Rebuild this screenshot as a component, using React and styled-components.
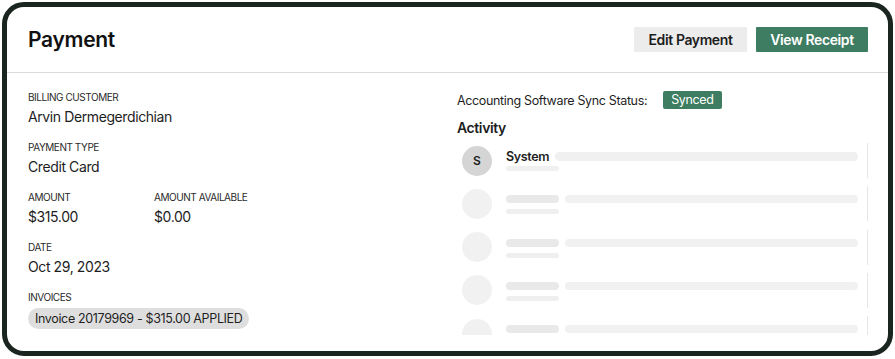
import React from "react"
import styled, { createGlobalStyle } from "styled-components"

const GlobalStyle = createGlobalStyle`
  html, body {
    margin: 0;
    padding: 0;
    background: #ffffff;
  }
  body {
    font-family: Inter, "Liberation Sans", Arial, sans-serif;
    color: #1d1d1d;
    -webkit-font-smoothing: antialiased;
  }
`

const Frame = styled.div`
  box-sizing: border-box;
  margin: 2px;
  width: 891px;
  height: 354px;
  border: 5px solid #1a2520;
  border-radius: 22px;
  background: #fff;
  overflow: hidden;
  display: flex;
  flex-direction: column;
`

const Header = styled.header`
  height: 65px;
  flex: none;
  display: flex;
  align-items: center;
  justify-content: space-between;
  padding: 0 20px 0 21px;
  border-bottom: 1px solid #dcdcdc;
`

const Title = styled.h1`
  margin: 0;
  font-size: 21px;
  font-weight: 600;
  letter-spacing: -0.3px;
  color: #111;
`

const Actions = styled.div`
  display: flex;
  gap: 9px;
`

const Button = styled.button`
  box-sizing: border-box;
  width: ${p => p.$width};
  height: 25px;
  padding: 0;
  border: none;
  border-radius: 1px;
  font-family: inherit;
  font-size: 14px;
  font-weight: 600;
  letter-spacing: -0.4px;
  background: ${p => (p.$primary ? "#3e7d61" : "#ececec")};
  color: ${p => (p.$primary ? "#fff" : "#1d1d1d")};
`

const Body = styled.div`
  flex: 1;
  min-height: 0;
  display: grid;
  grid-template-columns: 411px 411px;
  grid-template-rows: minmax(0, 1fr);
  column-gap: 18px;
  padding: 17px 20px 16px 21px;
`

const Details = styled.div`
  display: flex;
  flex-direction: column;
`

const FieldRow = styled.div`
  display: flex;
`

const Field = styled.div`
  width: ${p => p.$width || "auto"};
  margin-bottom: 13px;
`

const Label = styled.div`
  font-size: 10px;
  line-height: 14px;
  text-transform: uppercase;
  letter-spacing: -0.45px;
  color: #2a2a2a;
  margin-bottom: 3px;
`

const Value = styled.div`
  font-size: 14px;
  line-height: 20px;
  letter-spacing: -0.4px;
  color: #1d1d1d;
`

const Chip = styled.span`
  display: inline-block;
  margin-top: 1px;
  padding: 0 7px;
  height: 21px;
  line-height: 21px;
  border-radius: 11px;
  background: #dedede;
  font-size: 12.5px;
  letter-spacing: -0.35px;
  color: #1f1f1f;
`

const Side = styled.div`
  display: flex;
  flex-direction: column;
  min-height: 0;
`

const SyncRow = styled.div`
  display: flex;
  align-items: center;
  height: 20px;
  font-size: 12.5px;
  letter-spacing: -0.35px;
  color: #1f1f1f;
`

const Badge = styled.span`
  margin-left: 16px;
  height: 18px;
  line-height: 18px;
  padding: 0 8px;
  border-radius: 2px;
  background: #3e7d61;
  color: #fff;
  font-size: 12.5px;
`

const SectionTitle = styled.h2`
  margin: 8px 0 5px;
  font-size: 14px;
  line-height: 20px;
  font-weight: 600;
  letter-spacing: -0.4px;
  color: #1d1d1d;
`

const List = styled.div`
  flex: 1;
  min-height: 0;
  overflow: hidden;
`

const Row = styled.div`
  height: 35px;
  margin-bottom: 8.3px;
  padding: 0 9px 0 5px;
  border-right: 1px solid #e6e6e6;
  display: flex;
  align-items: center;
`

const Avatar = styled.div`
  flex: none;
  width: 30px;
  height: 30px;
  border-radius: 50%;
  background: ${p => (p.$empty ? "#f1f1f1" : "#d5d5d5")};
  display: flex;
  align-items: center;
  justify-content: center;
  font-size: 12px;
  font-weight: 600;
  color: #1d1d1d;
`

const RowContent = styled.div`
  flex: 1;
  margin-left: 14px;
  align-self: stretch;
  display: flex;
  flex-direction: column;
`

const TopLine = styled.div`
  display: flex;
  align-items: center;
  gap: 6px;
  height: 24px;
  margin-top: 1px;
`

const Name = styled.span`
  font-size: 12.5px;
  font-weight: 600;
  letter-spacing: -0.35px;
  color: #1d1d1d;
`

const Bar = styled.div`
  height: ${p => p.$h || 8}px;
  width: ${p => p.$w || "auto"};
  flex: ${p => (p.$grow ? 1 : "none")};
  border-radius: 5px;
  background: ${p => p.$tone || "#f1f1f1"};
`

const SubLine = styled.div`
  margin-top: -2px;
`

const placeholders = [1, 2, 3, 4]

export default function App() {
  return (
    <>
      <GlobalStyle />
      <Frame>
        <Header>
          <Title>Payment</Title>
          <Actions>
            <Button $width="113px">Edit Payment</Button>
            <Button $primary $width="112px">View Receipt</Button>
          </Actions>
        </Header>
        <Body>
          <Details>
            <Field>
              <Label>Billing Customer</Label>
              <Value>Arvin Dermegerdichian</Value>
            </Field>
            <Field>
              <Label>Payment Type</Label>
              <Value>Credit Card</Value>
            </Field>
            <FieldRow>
              <Field $width="126px">
                <Label>Amount</Label>
                <Value>$315.00</Value>
              </Field>
              <Field>
                <Label>Amount Available</Label>
                <Value>$0.00</Value>
              </Field>
            </FieldRow>
            <Field>
              <Label>Date</Label>
              <Value>Oct 29, 2023</Value>
            </Field>
            <Field>
              <Label>Invoices</Label>
              <div>
                <Chip>Invoice 20179969 - $315.00 APPLIED</Chip>
              </div>
            </Field>
          </Details>
          <Side>
            <SyncRow>
              Accounting Software Sync Status:
              <Badge>Synced</Badge>
            </SyncRow>
            <SectionTitle>Activity</SectionTitle>
            <List>
              <Row>
                <Avatar>S</Avatar>
                <RowContent>
                  <TopLine>
                    <Name>System</Name>
                    <Bar $grow $h={9} $tone="#f0f0f0" />
                  </TopLine>
                  <SubLine>
                    <Bar $w="53px" $h={5} $tone="#f0f0f0" />
                  </SubLine>
                </RowContent>
              </Row>
              {placeholders.map(i => (
                <Row key={i}>
                  <Avatar $empty />
                  <RowContent>
                    <TopLine>
                      <Bar $w="53px" $h={8} $tone="#e9e9e9" />
                      <Bar $grow $h={8} $tone="#f1f1f1" />
                    </TopLine>
                    <SubLine>
                      <Bar $w="53px" $h={5} $tone="#efefef" />
                    </SubLine>
                  </RowContent>
                </Row>
              ))}
            </List>
          </Side>
        </Body>
      </Frame>
    </>
  )
}
